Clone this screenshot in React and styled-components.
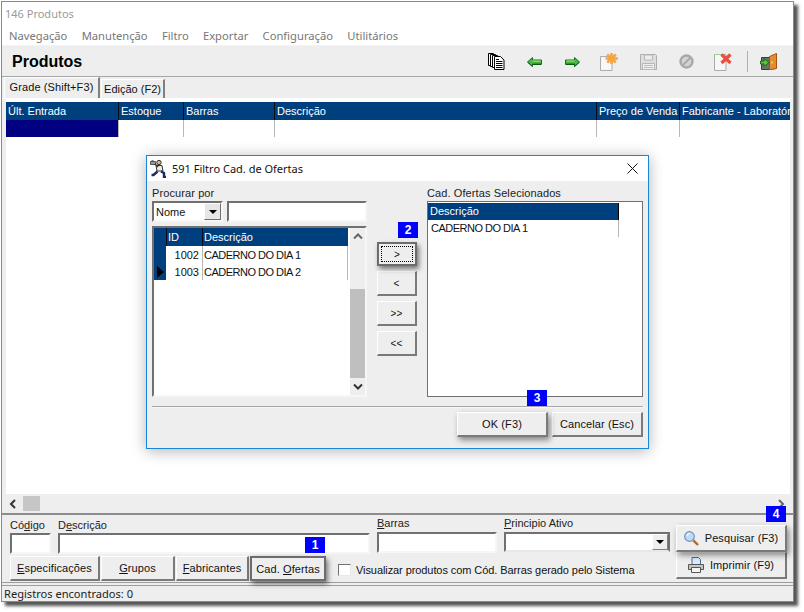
import React from 'react'
import styled, { createGlobalStyle, css } from 'styled-components'

const GlobalStyle = createGlobalStyle`
  html, body {
    margin: 0;
    background: #fff;
  }
  body {
    font-family: "Liberation Sans", Arial, sans-serif;
    font-size: 11px;
    color: #111;
  }
  * { box-sizing: border-box; }
`

const BLUE = '#003f7d'

const gridColumns = [
  { name: 'Últ. Entrada', width: 113 },
  { name: 'Estoque', width: 65 },
  { name: 'Barras', width: 91 },
  { name: 'Descrição', width: 322 },
  { name: 'Preço de Venda', width: 83 },
  { name: 'Fabricante - Laboratório', width: 110 },
]

const DocsIcon = () => (
  <svg width="17" height="17" viewBox="0 0 17 17">
    <path d="M0.500 0.500h5v12h-5z" fill="#fff" stroke="#000" />
    <path d="M2.500 1.500h5v12h-5z" fill="#fff" stroke="#000" />
    <path d="M4.500 2.500h5v12h-5z" fill="#fff" stroke="#000" />
    <path d="M6.500 3.500h6l3.500 3.500v9.500H6.500z" fill="#fff" stroke="#000" />
    <path d="M8 8.500h6.500M8 10.500h6.500M8 12.500h6.500M8 14.500h6.500M8 6.500h3" stroke="#000" />
  </svg>
)

const ArrowIcon = ({ flip }) => (
  <svg width="15" height="10" viewBox="0 0 15 10" style={flip ? { transform: 'scaleX(-1)' } : undefined}>
    <path d="M0.500 5 5.500 0.500v2.500h9v4h-9v2.500z" fill="#4cb640" stroke="#0e7416" />
    <path d="M5 7.500h9.500M5.500 9.500 0.800 5.300" stroke="#0a5c12" />
    <path d="M5.500 4h8" stroke="#a6e596" />
  </svg>
)

const NewIcon = () => (
  <svg width="20" height="18" viewBox="0 0 20 18">
    <path d="M0.500 3.500h11.500v14H0.500z" fill="#f7f7f7" stroke="#ababab" />
    <path d="M11.500 0v11M5.500 5.500h12.500M7.200 1.500l8.600 8M15.800 1.500l-8.600 8" stroke="#f5a544" strokeWidth="2.600" />
  </svg>
)

const SaveIcon = () => (
  <svg width="17" height="17" viewBox="0 0 17 17">
    <path d="M0.500 1.500h15l1 1v14H0.500z" fill="#dedede" stroke="#aeaeae" />
    <path d="M4.500 2h8v5h-8z" fill="#ededed" stroke="#b8b8b8" />
    <path d="M2.500 10.500h12v6h-12z" fill="#f0f0f0" stroke="#b8b8b8" />
    <path d="M4 12.500h9M4 14.500h9" stroke="#bdbdbd" />
  </svg>
)

const BlockIcon = () => (
  <svg width="15" height="15" viewBox="0 0 15 15">
    <circle cx="7.500" cy="7.500" r="6" fill="#d4d4d4" stroke="#a8a8a8" strokeWidth="2.400" />
    <path d="M4 11l7-7" stroke="#a8a8a8" strokeWidth="1.800" />
  </svg>
)

const DeleteIcon = () => (
  <svg width="20" height="18" viewBox="0 0 20 18">
    <path d="M0.500 1.500h11.500v16H0.500z" fill="#f7f7f7" stroke="#ababab" />
    <path d="M0.500 1.500h6" stroke="#9ccf90" />
    <path d="M7.500 1.500l9 8.500M16.500 1.500l-9 8.500" stroke="#ea4f3d" strokeWidth="3.200" />
  </svg>
)

const ExitIcon = () => (
  <svg width="17" height="17" viewBox="0 0 17 17">
    <path d="M1.500 4.500h8v12h-8z" fill="#6f6f6f" stroke="#3d3d3d" />
    <path d="M9.500 3.500 16.500 0.500v15l-7 1.500z" fill="#e58c2e" stroke="#9c5512" />
    <path d="M12 8.500v2" stroke="#ffe26a" strokeWidth="1.500" />
    <path d="M0.500 8h3.500V5.500L9 9.500l-5 4V11H0.500z" fill="#5fc03c" stroke="#1d6b13" />
  </svg>
)

const ManIcon = () => (
  <svg width="18" height="19" viewBox="0 0 18 19">
    <path d="M0.500 2.500h5v3h-5z" fill="#9a9a9a" stroke="#555" />
    <path d="M1.500 1.500h2" stroke="#777" />
    <circle cx="9" cy="3.500" r="2.200" fill="#d8b58f" stroke="#333" />
    <path d="M6 6.500h6l1 5.500H7z" fill="#ececec" stroke="#333" />
    <path d="M5 5l3 3" stroke="#333" strokeWidth="1.400" />
    <path d="M7.500 12.500l-4 3.500h-2M11 12.500l3 1.500v4h2" fill="none" stroke="#1b2a66" strokeWidth="2.400" />
  </svg>
)

const SearchIcon = () => (
  <svg width="15" height="15" viewBox="0 0 15 15">
    <circle cx="5.500" cy="5.500" r="4.800" fill="#bcdcf5" stroke="#6f93b8" strokeWidth="1.200" />
    <path d="M3 5a3 3 0 0 1 3-2.500" fill="none" stroke="#fff" />
    <path d="M9.300 9.300l4.700 4.700" stroke="#b8682a" strokeWidth="2.400" />
  </svg>
)

const PrintIcon = () => (
  <svg width="16" height="16" viewBox="0 0 16 16">
    <path d="M4 0.500h6.500l2 2v6H4z" fill="#dbe9f8" stroke="#47689a" />
    <path d="M0.500 7.500h15v5h-15z" fill="#c6c6c6" stroke="#555" />
    <path d="M3.500 10.500h9v5h-9z" fill="#f4f4f4" stroke="#555" />
  </svg>
)

const Chevron = ({ dir, light }) => {
  const paths = {
    up: 'M1 6.500l4-4 4 4',
    down: 'M1 2.500l4 4 4-4',
    left: 'M6 1 2 5l4 4',
    right: 'M2 1l4 4-4 4',
  }
  return (
    <svg width="10" height="10" viewBox="0 0 10 10">
      <path d={paths[dir]} fill="none" stroke={light ? '#666' : '#333'} strokeWidth="2" />
    </svg>
  )
}

const Caret = () => (
  <svg width="8" height="4" viewBox="0 0 8 4">
    <path d="M0 0h8L4 4z" fill="#000" />
  </svg>
)

const App = () => (
  <Page>
    <GlobalStyle />
    <Window>
      <TitleBar>146 Produtos</TitleBar>
      <MenuBar>
        {['Navegação', 'Manutenção', 'Filtro', 'Exportar', 'Configuração', 'Utilitários'].map((m) => (
          <span key={m}>{m}</span>
        ))}
      </MenuBar>
      <Toolbar>
        <h1>Produtos</h1>
        <Tools>
          <Tool><DocsIcon /></Tool>
          <Tool><ArrowIcon /></Tool>
          <Tool><ArrowIcon flip /></Tool>
          <Tool><NewIcon /></Tool>
          <Tool><SaveIcon /></Tool>
          <Tool><BlockIcon /></Tool>
          <Tool><DeleteIcon /></Tool>
          <ToolSep />
          <Tool $w={40}><ExitIcon /></Tool>
        </Tools>
      </Toolbar>
      <TabStrip>
        <Tab $active>Grade (Shift+F3)</Tab>
        <Tab>Edição (F2)</Tab>
      </TabStrip>
      <GridArea>
        <GridHead>
          {gridColumns.map((c) => (
            <HeadCell key={c.name} $w={c.width}>{c.name}</HeadCell>
          ))}
        </GridHead>
        <GridRow>
          {gridColumns.map((c, i) => (
            <RowCell key={c.name} $w={c.width} $selected={i === 0} />
          ))}
        </GridRow>
      </GridArea>
      <HScroll>
        <Chevron dir="left" />
        <HThumb />
        <HSpacer />
        <Chevron dir="right" light />
      </HScroll>
      <FilterPanel>
        <FilterLeft>
          <FieldRow>
            <Field $w={41} $low>
              <label>Có<u>d</u>igo</label>
              <TextBox />
            </Field>
            <Field $w={312} $low>
              <label>D<u>e</u>scrição</label>
              <TextBox />
              <Badge $right={45} $top={20}>1</Badge>
            </Field>
            <Field $w={120}>
              <label><u>B</u>arras</label>
              <TextBox />
            </Field>
            <Field $w={166}>
              <label><u>P</u>rincipio Ativo</label>
              <ComboBox><ComboArrow><Caret /></ComboArrow></ComboBox>
            </Field>
          </FieldRow>
          <ActionRow>
            <Button $w={90} $h={25}><span><u>E</u>specificações</span></Button>
            <Button $w={74} $h={25}><span><u>G</u>rupos</span></Button>
            <Button $w={73} $h={25}><span><u>F</u>abricantes</span></Button>
            <Button $w={76} $h={25} $focus><span>Cad. <u>O</u>fertas</span></Button>
            <CheckLabel>
              <CheckBox />
              Visualizar produtos com Cód. Barras gerado pelo Sistema
            </CheckLabel>
          </ActionRow>
        </FilterLeft>
        <FilterRight>
          <Button $w={111} $h={27} $raised>
            <SearchIcon />
            <span>Pesquisar (F3)</span>
            <Badge $right={-1} $top={-20}>4</Badge>
          </Button>
          <Button $w={111} $h={27}>
            <PrintIcon />
            <span>Imprimir (F9)</span>
          </Button>
        </FilterRight>
      </FilterPanel>
      <StatusBar>Registros encontrados: 0</StatusBar>

      <Dialog>
        <DialogTitle>
          <ManIcon />
          <span>591 Filtro Cad. de Ofertas</span>
          <CloseX viewBox="0 0 11 11"><path d="M0.500 0.500l10 10M10.500 0.500l-10 10" stroke="#111" /></CloseX>
        </DialogTitle>
        <DialogBody>
          <Columns>
            <LeftCol>
              <Caption>Procurar por</Caption>
              <SearchRow>
                <SelectBox>
                  Nome
                  <SelectArrow><Caret /></SelectArrow>
                </SelectBox>
                <SearchInput />
              </SearchRow>
              <ListFrame>
                <ListInner>
                  <ListHead>
                    <Indicator />
                    <ListHeadCell $w={36}>ID</ListHeadCell>
                    <ListHeadCell $w={146}>Descrição</ListHeadCell>
                  </ListHead>
                  {[['1002', 'CADERNO DO DIA 1'], ['1003', 'CADERNO DO DIA 2']].map(([id, desc], i) => (
                    <ListRow key={id}>
                      <Indicator>{i === 1 && <Pointer />}</Indicator>
                      <IdCell>{id}</IdCell>
                      <DescCell>{desc}</DescCell>
                    </ListRow>
                  ))}
                </ListInner>
                <VScroll>
                  <VEnd $h={17}><Chevron dir="up" light /></VEnd>
                  <VTrack />
                  <VThumb />
                  <VEnd $h={17}><Chevron dir="down" /></VEnd>
                </VScroll>
              </ListFrame>
            </LeftCol>
            <MoveCol>
              <Button $w={40} $h={24} $focus $dotted $small>
                <span>&gt;</span>
                <Badge $right={-3} $top={-22}>2</Badge>
              </Button>
              <Button $w={40} $h={25} $small><span>&lt;</span></Button>
              <Button $w={40} $h={25} $small><span>&gt;&gt;</span></Button>
              <Button $w={40} $h={25} $small><span>&lt;&lt;</span></Button>
            </MoveCol>
            <RightCol>
              <Caption>Cad. Ofertas Selecionados</Caption>
              <PickedFrame>
                <PickedHead>Descrição</PickedHead>
                <PickedRow>CADERNO DO DIA 1</PickedRow>
              </PickedFrame>
            </RightCol>
          </Columns>
          <Divider />
          <DialogActions>
            <Button $w={91} $h={25} $raised>
              <span>OK (F3)</span>
              <Badge $right={-1} $top={-23}>3</Badge>
            </Button>
            <Button $w={91} $h={25}><span>Cancelar (Esc)</span></Button>
          </DialogActions>
        </DialogBody>
      </Dialog>
    </Window>
  </Page>
)

export default App

const Page = styled.div`
  width: 804px;
  height: 612px;
  padding: 1px 0 0 1px;
  background: #fff;
  overflow: hidden;
`

const Window = styled.div`
  position: relative;
  width: 793px;
  height: 601px;
  display: flex;
  flex-direction: column;
  background: #eeeeee;
  border: 1px solid #8a8a8a;
  box-shadow: 4px 4px 3px #555;
`

const TitleBar = styled.div`
  height: 25px;
  flex: none;
  padding: 4px 0 0 3px;
  background: #fff;
  font-family: "Noto Sans", sans-serif;
  font-size: 11px;
  line-height: 16px;
  color: #9a9a9a;
`

const MenuBar = styled.div`
  height: 19px;
  flex: none;
  display: flex;
  gap: 14.300px;
  padding: 0 0 0 7px;
  background: #fff;
  font-family: "Noto Sans", sans-serif;
  font-size: 11.200px;
  line-height: 17px;
  color: #777;
  border-bottom: 1px solid #f3f3f3;
`

const Toolbar = styled.div`
  height: 30px;
  flex: none;
  margin-top: 1px;
  display: flex;
  align-items: center;
  justify-content: space-between;
  border-bottom: 1px solid #a6a6a6;
  h1 {
    margin: 0 0 0 10px;
    font-size: 16px;
    font-weight: bold;
    color: #000;
  }
`

const Tools = styled.div`
  display: flex;
  align-items: center;
  margin-right: 5px;
`

const Tool = styled.div`
  width: ${(p) => p.$w || 38}px;
  height: 24px;
  display: flex;
  align-items: center;
  justify-content: center;
`

const ToolSep = styled.div`
  width: 1px;
  height: 21px;
  margin-left: 4px;
  background: #b0b0b0;
`

const TabStrip = styled.div`
  height: 22px;
  flex: none;
  display: flex;
  align-items: flex-end;
  gap: 1px;
  padding-left: 2px;
  border-bottom: 1px solid #fff;
`

const Tab = styled.div`
  display: flex;
  align-items: center;
  justify-content: center;
  background: #eeeeee;
  border: solid #fff;
  border-width: 1px 2px 0 1px;
  border-right-color: #808080;
  ${(p) => p.$active ? css`
    width: 96px;
    height: 21px;
    padding-bottom: 3px;
    letter-spacing: 0.1px;
  ` : css`
    width: 64px;
    height: 19px;
  `}
`

const GridArea = styled.div`
  flex: 1;
  background: #fff;
  margin: 0 3px 0 4px;
  padding-top: 3px;
`

const GridHead = styled.div`
  display: flex;
  height: 18px;
  background: ${BLUE};
  overflow: hidden;
`

const HeadCell = styled.div`
  flex: none;
  width: ${(p) => p.$w}px;
  padding: 2px 0 0 2px;
  line-height: 14px;
  color: #fff;
  white-space: nowrap;
  overflow: hidden;
  border-right: 1px solid #0b0b1c;
  &:last-child { border-right: 0; }
`

const GridRow = styled.div`
  display: flex;
  height: 17px;
`

const RowCell = styled.div`
  flex: none;
  width: ${(p) => p.$w}px;
  background: ${(p) => (p.$selected ? '#000080' : '#fff')};
  border-right: 1px solid #b8b8b8;
  &:last-child { border-right: 0; }
`

const HScroll = styled.div`
  height: 19px;
  flex: none;
  display: flex;
  align-items: center;
  padding: 0 6px 0 7px;
`

const HThumb = styled.div`
  width: 17px;
  height: 15px;
  margin-left: 4px;
  background: #c6c6c6;
`

const HSpacer = styled.div`
  flex: 1;
`

const FilterPanel = styled.div`
  height: 70px;
  flex: none;
  display: flex;
  gap: 6px;
  padding: 2px 0 0 8px;
  border-top: 2px solid #8c8c8c;
  border-bottom: 1px solid #9c9c9c;
`

const FilterLeft = styled.div`
  width: 660px;
  flex: none;
`

const FilterRight = styled.div`
  display: flex;
  flex-direction: column;
  margin-top: 8px;
`

const FieldRow = styled.div`
  display: flex;
  gap: 7px;
  height: 39px;
`

const Field = styled.div`
  position: relative;
  width: ${(p) => p.$w}px;
  padding-top: ${(p) => (p.$low ? 2 : 0)}px;
  label {
    display: block;
    height: ${(p) => (p.$low ? 14 : 15)}px;
    line-height: 12px;
    color: #222;
  }
`

const sunken = css`
  background: #fff;
  border: 2px solid;
  border-color: #707070 #f6f6f6 #f6f6f6 #707070;
`

const TextBox = styled.div`
  ${sunken}
  height: 21px;
`

const ComboBox = styled.div`
  ${sunken}
  height: 20px;
  display: flex;
  justify-content: flex-end;
  border-right-color: #707070;
  border-bottom-color: #e8e8e8;
`

const ComboArrow = styled.div`
  width: 16px;
  background: #eee;
  border: 1px solid;
  border-color: #fff #808080 #808080 #fff;
  display: flex;
  align-items: center;
  justify-content: center;
`

const ActionRow = styled.div`
  display: flex;
  align-items: flex-start;
  gap: 1px;
`

const Button = styled.div`
  position: relative;
  flex: none;
  width: ${(p) => p.$w}px;
  height: ${(p) => p.$h}px;
  display: flex;
  align-items: center;
  justify-content: center;
  gap: 6px;
  background: #eeeeee;
  color: #111;
  border: 1px solid;
  border-color: #fff #7a7a7a #7a7a7a #fff;
  border-width: 1px 2px 2px 1px;
  font-size: ${(p) => (p.$small ? 10 : 11)}px;
  letter-spacing: 0.1px;
  ${(p) => p.$raised && css`
    box-shadow: 2px 3px 6px rgba(0, 0, 0, 0.45);
    z-index: 1;
  `}
  ${(p) => p.$focus && css`
    border: 2px solid #6c6c6c;
    box-shadow: 2px 3px 5px rgba(0, 0, 0, 0.5);
    z-index: 1;
  `}
  ${(p) => p.$dotted && css`
    &::before {
      content: "";
      position: absolute;
      inset: 2px;
      border: 1px dotted #000;
    }
  `}
`

const Badge = styled.span`
  position: absolute;
  right: ${(p) => p.$right}px;
  top: ${(p) => p.$top}px;
  width: 20px;
  height: 16px;
  background: #0000ff;
  color: #fff;
  font-weight: bold;
  font-size: 12px;
  line-height: 16px;
  letter-spacing: 0;
  text-align: center;
  z-index: 2;
`

const CheckLabel = styled.div`
  display: flex;
  align-items: center;
  gap: 5px;
  margin: 8px 0 0 11px;
  letter-spacing: -0.080px;
`

const CheckBox = styled.span`
  width: 13px;
  height: 12px;
  background: #fff;
  border: 1px solid;
  border-color: #707070 #e8e8e8 #e8e8e8 #707070;
`

const StatusBar = styled.div`
  flex: none;
  height: 16px;
  padding-left: 2px;
  margin-top: 2px;
  border-top: 1px solid #9c9c9c;
  font-family: "Noto Sans", sans-serif;
  font-size: 11.100px;
  line-height: 15px;
  color: #222;
`

const Dialog = styled.div`
  position: absolute;
  left: 144px;
  top: 153px;
  width: 503px;
  height: 294px;
  display: flex;
  flex-direction: column;
  background: #eeeeee;
  border: 1px solid #1a84d6;
  box-shadow: 0 2px 14px rgba(0, 0, 0, 0.3);
  z-index: 5;
`

const DialogTitle = styled.div`
  height: 25px;
  flex: none;
  display: flex;
  align-items: center;
  gap: 4px;
  padding: 0 10px 0 3px;
  background: #fff;
  font-family: "Noto Sans", sans-serif;
  font-size: 11px;
  color: #111;
  span { flex: 1; }
`

const CloseX = styled.svg`
  width: 11px;
  height: 11px;
`

const DialogBody = styled.div`
  flex: 1;
  padding: 6px 5px 0;
`

const Columns = styled.div`
  display: flex;
`

const LeftCol = styled.div`
  width: 215px;
`

const RightCol = styled.div`
  width: 216px;
`

const Caption = styled.div`
  height: 12px;
  line-height: 12px;
  color: #222;
  letter-spacing: 0.1px;
`

const SearchRow = styled.div`
  display: flex;
  gap: 4px;
  margin-top: 2px;
`

const SelectBox = styled.div`
  ${sunken}
  width: 71px;
  height: 21px;
  display: flex;
  align-items: center;
  justify-content: space-between;
  padding-left: 2px;
`

const SelectArrow = styled.div`
  width: 17px;
  height: 17px;
  background: #e6e6e6;
  border: 1px solid;
  border-color: #fff #707070 #707070 #fff;
  display: flex;
  align-items: center;
  justify-content: center;
`

const SearchInput = styled.div`
  ${sunken}
  flex: 1;
  height: 21px;
`

const ListFrame = styled.div`
  ${sunken}
  height: 171px;
  margin-top: 4px;
  display: flex;
`

const ListInner = styled.div`
  width: 194px;
  flex: none;
  background: #fff;
`

const ListHead = styled.div`
  display: flex;
  height: 18px;
  background: ${BLUE};
`

const ListHeadCell = styled.div`
  width: ${(p) => p.$w}px;
  padding: 2px 0 0 1px;
  line-height: 14px;
  color: #fff;
  border-left: 1px solid #0b0b1c;
`

const Indicator = styled.div`
  width: 12px;
  flex: none;
  background: ${BLUE};
  display: flex;
  align-items: center;
  justify-content: center;
`

const Pointer = styled.span`
  width: 0;
  height: 0;
  border-left: 7px solid #000;
  border-top: 6px solid transparent;
  border-bottom: 6px solid transparent;
`

const ListRow = styled.div`
  display: flex;
  height: 17px;
  line-height: 18px;
`

const IdCell = styled.div`
  width: 37px;
  text-align: right;
  padding-right: 3px;
  border-right: 1px solid #b8b8b8;
`

const DescCell = styled.div`
  width: 145px;
  padding-left: 1px;
  letter-spacing: -0.5px;
  border-right: 1px solid #b8b8b8;
  white-space: nowrap;
`

const VScroll = styled.div`
  width: 15px;
  margin-left: 2px;
  display: flex;
  flex-direction: column;
  background: #eee;
`

const VEnd = styled.div`
  height: ${(p) => p.$h}px;
  flex: none;
  display: flex;
  align-items: center;
  justify-content: center;
`

const VTrack = styled.div`
  height: 44px;
  flex: none;
`

const VThumb = styled.div`
  flex: 1;
  background: #bfbfbf;
`

const MoveCol = styled.div`
  width: 60px;
  flex: none;
  display: flex;
  flex-direction: column;
  gap: 5px;
  padding: 55px 0 0 10px;
`

const PickedFrame = styled.div`
  height: 196px;
  margin-top: 2px;
  background: #fff;
  border: 1px solid #707070;
  padding-top: 1px;
`

const PickedHead = styled.div`
  width: 191px;
  height: 17px;
  padding-left: 2px;
  line-height: 17px;
  background: ${BLUE};
  color: #fff;
  border-right: 1px solid #000;
`

const PickedRow = styled.div`
  width: 191px;
  height: 17px;
  padding-left: 3px;
  line-height: 17px;
  letter-spacing: -0.5px;
  border-right: 1px solid #b8b8b8;
`

const Divider = styled.div`
  height: 2px;
  margin: 9px 0 0;
  background: #a8a8a8;
  border-bottom: 1px solid #f6f6f6;
`

const DialogActions = styled.div`
  display: flex;
  justify-content: flex-end;
  gap: 4px;
  margin-top: 4px;
`
